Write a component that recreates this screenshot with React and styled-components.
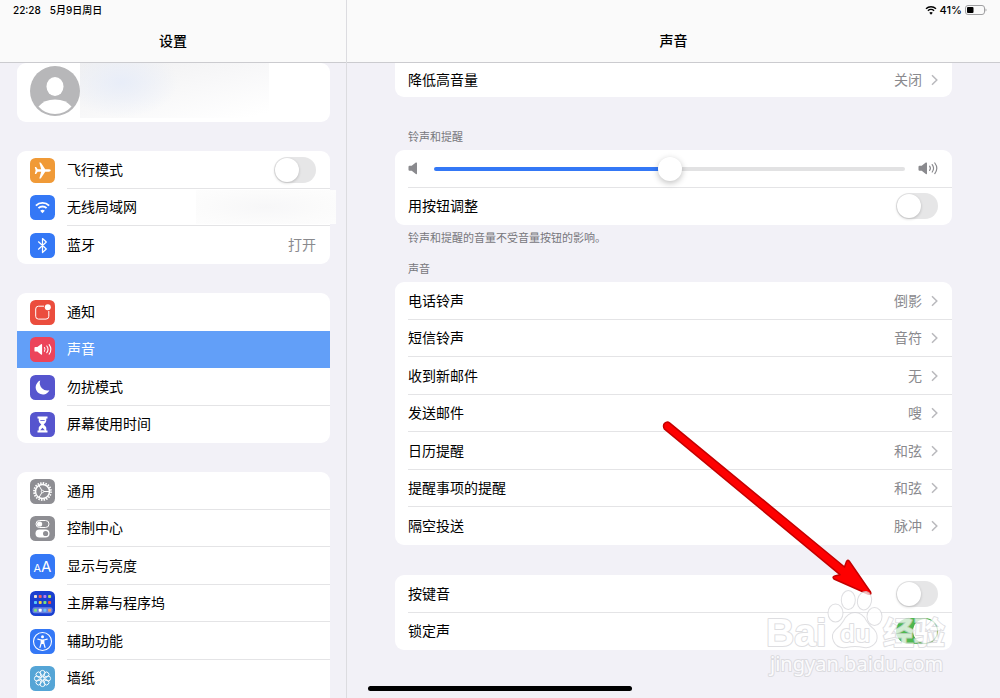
import { useState } from "react";
import styled, { createGlobalStyle, css } from "styled-components";

const soundRows = [
  { label: "电话铃声", value: "倒影" },
  { label: "短信铃声", value: "音符" },
  { label: "收到新邮件", value: "无" },
  { label: "发送邮件", value: "嗖" },
  { label: "日历提醒", value: "和弦" },
  { label: "提醒事项的提醒", value: "和弦" },
  { label: "隔空投送", value: "脉冲" },
];

const alertRows = [
  { icon: "notify", label: "通知", plain: true },
  { icon: "sound", label: "声音", active: true },
  { icon: "moon", label: "勿扰模式" },
  { icon: "hourglass", label: "屏幕使用时间" },
];

const generalRows = [
  { icon: "gear", label: "通用" },
  { icon: "control", label: "控制中心" },
  { icon: "display", label: "显示与亮度" },
  { icon: "home", label: "主屏幕与程序坞" },
  { icon: "access", label: "辅助功能" },
  { icon: "wallpaper", label: "墙纸" },
];

const tileColors = {
  plane: "#f09a37",
  wifi: "#3478f6",
  bluetooth: "#3478f6",
  notify: "#eb4d3d",
  sound: "#ec445a",
  moon: "#5655ce",
  hourglass: "#5655ce",
  gear: "#8e8e93",
  control: "#8e8e93",
  display: "#3478f6",
  home: "#1a3fd0",
  access: "#3478f6",
  wallpaper: "#55a5d6",
};

const homeDots = [
  ["#e8e4da", "#f0605a", "#b67bf2", "#b5e05a"],
  ["#5ac8fa", "#f8c93c", "#7be07b", "#f0503c"],
];

const dockDots = ["#7be07b", "#ffffff", "#6cc4f8", "#f0a060"];

const petals = [0, 45, 90, 135, 180, 225, 270, 315];

const WifiShape = () => (
  <>
    <path d="M1 4.6a8.6 8.6 0 0 1 12 0" fill="none" stroke="currentColor" strokeWidth="1.7" />
    <path d="M3.3 7a5.3 5.3 0 0 1 7.4 0" fill="none" stroke="currentColor" strokeWidth="1.7" />
    <path d="M7 11.6L4.9 9.4a3 3 0 0 1 4.2 0z" fill="currentColor" />
  </>
);

const SpeakerShape = ({ waves }) => (
  <>
    <path
      d="M1.500 3.800h2.200L7.800.6Q9 0 9 1.200v10.200q0 1.200-1.200.6L3.700 8.800H1.500Q.5 8.800.5 7.800v-3q0-1 1-1z"
      fill="currentColor"
    />
    {waves && (
      <g fill="none" stroke="currentColor" strokeWidth="1.200" strokeLinecap="round">
        <path d="M11.600 4.200q1.600 2.100 0 4.200" />
        <path d="M14.200 2.600q2.800 3.700 0 7.400" />
        <path d="M16.800 1q4 5.300 0 10.600" />
      </g>
    )}
  </>
);

const glyphs = {
  plane: (
    <path
      d="M20.800 12.500q0-1.100-1.900-1.200h-3.700L11.100 5q-.3-.5-.9-.5h-.9l1.900 6.800H7.700L6.100 9.100H4.800l.8 3.400-.8 3.400h1.300l1.600-2.200h3.500l-1.900 6.800h.9q.6 0 .9-.5l4.100-6.300h3.700q1.900-.1 1.900-1.200z"
      fill="#fff"
    />
  ),
  wifi: (
    <g transform="translate(4.800 5.500) scale(1.100)">
      <WifiShape />
    </g>
  ),
  bluetooth: (
    <path
      d="M8.500 8.800l7.800 7.200-3.800 3.500v-14L16.300 9l-7.800 7.200"
      fill="none"
      stroke="#fff"
      strokeWidth="1.200"
      strokeLinejoin="round"
      strokeLinecap="round"
    />
  ),
  notify: (
    <>
      <path
        d="M14 6.200H8.500Q5.700 6.200 5.700 9v7.300q0 2.800 2.800 2.800H16q2.800 0 2.800-2.800V11"
        fill="none"
        stroke="#fff"
        strokeWidth="1"
      />
      <circle cx="17.800" cy="7.200" r="3" fill="#fff" />
    </>
  ),
  sound: (
    <g transform="translate(4 6.700) scale(.9)">
      <SpeakerShape waves />
    </g>
  ),
  moon: <path d="M10.200 5.600a7.200 7.200 0 1 0 9.200 9.700A7.600 7.600 0 0 1 10.200 5.600z" fill="#fff" />,
  hourglass: (
    <>
      <path
        d="M7.500 4.500h10v2h-1.200v2.300q0 1.400-2.600 3.700 2.600 2.300 2.600 3.700v2.300h1.200v2h-10v-2h1.200v-2.300q0-1.400 2.600-3.700-2.600-2.300-2.600-3.700V6.500H7.500z"
        fill="#fff"
      />
      <path d="M10.200 18.200l2.300-2.400 2.300 2.400z" fill="#5655ce" />
      <path d="M10.300 8.500h4.400" stroke="#5655ce" strokeWidth=".8" />
    </>
  ),
  gear: (
    <g fill="none" stroke="#fff">
      <circle cx="12.500" cy="12.500" r="8.500" strokeWidth="1.800" strokeDasharray="1.500 1.170" />
      <circle cx="12.500" cy="12.500" r="7" strokeWidth="1.500" />
      <path d="M12.500 12.500h6.500M12.500 12.500l-3.300-5.600M12.500 12.500l-3.300 5.600" strokeWidth="1" />
      <circle cx="12.500" cy="12.500" r="1.200" fill="#8e8e93" strokeWidth=".9" />
    </g>
  ),
  control: (
    <>
      <rect x="6" y="4.500" width="13" height="7" rx="3.500" fill="none" stroke="#fff" strokeWidth="1" />
      <circle cx="9.600" cy="8" r="2.600" fill="#fff" />
      <rect x="5.500" y="13.500" width="14" height="8" rx="4" fill="#fff" />
      <circle cx="15.600" cy="17.500" r="2.600" fill="#8e8e93" />
    </>
  ),
  display: (
    <g fill="#fff" fontFamily="Inter, sans-serif">
      <text x="3.500" y="17.500" fontSize="11">A</text>
      <text x="11" y="17.500" fontSize="15">A</text>
    </g>
  ),
  home: (
    <>
      {homeDots.map((row, y) =>
        row.map((fill, x) => (
          <rect key={`${y}-${x}`} x={4 + x * 4.700} y={4 + y * 6} width="3" height="3" rx=".8" fill={fill} />
        ))
      )}
      <rect x="2.500" y="16.300" width="20" height="6" rx="2" fill="#fff" opacity=".35" />
      {dockDots.map((fill, x) => (
        <rect key={fill} x={4 + x * 4.700} y="17.800" width="3" height="3" rx=".8" fill={fill} />
      ))}
    </>
  ),
  access: (
    <>
      <circle cx="12.500" cy="12.500" r="9" fill="none" stroke="#fff" strokeWidth="1.100" />
      <circle cx="12.500" cy="7.700" r="1.500" fill="#fff" />
      <path
        d="M7.800 10.200l3.400.8v3l-1.200 4.400M17.200 10.200l-3.400.8v3l1.200 4.400"
        fill="none"
        stroke="#fff"
        strokeWidth="1.200"
        strokeLinecap="round"
        strokeLinejoin="round"
      />
      <path d="M11 10.500h3v4.500h-3z" fill="#fff" />
    </>
  ),
  wallpaper: (
    <g fill="none" stroke="#fff" strokeWidth=".9">
      {petals.map((angle) => (
        <circle key={angle} cx="12.500" cy="6.900" r="2.500" transform={`rotate(${angle} 12.500 12.500)`} />
      ))}
      {petals.map((angle) => (
        <path key={angle} d="M12.500 9.500v1.600" transform={`rotate(${angle + 22} 12.500 12.500)`} />
      ))}
      <circle cx="12.500" cy="12.500" r="1.800" />
    </g>
  ),
};

const Tile = ({ name }) => (
  <TileSvg viewBox="0 0 25 25" aria-hidden="true">
    <rect width="25" height="25" rx="5.500" fill={tileColors[name]} />
    {glyphs[name]}
  </TileSvg>
);

const Speaker = ({ waves }) => (
  <SpeakerSvg viewBox="0 0 20 13" aria-hidden="true">
    <SpeakerShape waves={waves} />
  </SpeakerSvg>
);

const Chevron = () => (
  <ChevronSvg viewBox="0 0 7 12" aria-hidden="true">
    <path d="M1 1.300l4.800 4.700L1 10.700" />
  </ChevronSvg>
);

const SidebarRow = ({ icon, label, value, active, plain }) => (
  <Row as="a" href="#" $active={active} $plain={plain}>
    <Tile name={icon} />
    <RowBody>
      <RowLabel>{label}</RowLabel>
      {value && <RowValue>{value}</RowValue>}
    </RowBody>
  </Row>
);

const SoundRow = ({ label, value }) => (
  <Row as="a" href="#">
    <RowBody>
      <RowLabel>{label}</RowLabel>
      <RowValue>{value}</RowValue>
      <Chevron />
    </RowBody>
  </Row>
);

const ToggleRow = ({ icon, label, defaultChecked }) => (
  <Row as="label">
    {icon && <Tile name={icon} />}
    <RowBody>
      <RowLabel>{label}</RowLabel>
      <Toggle type="checkbox" role="switch" defaultChecked={defaultChecked} />
    </RowBody>
  </Row>
);

const App = () => {
  const [volume, setVolume] = useState(50);

  return (
    <>
      <GlobalStyle />
      <Screen>
        <Sidebar>
          <Header>
            <StatusBar>
              <span>22:28</span>
              <span>5月9日周日</span>
            </StatusBar>
            <Title>设置</Title>
          </Header>
          <SidebarContent>
            <ProfileCard>
              <Avatar viewBox="0 0 50 50" aria-hidden="true">
                <circle cx="25" cy="25" r="25" fill="#b7b7b9" />
                <ellipse cx="25" cy="20.500" rx="8.500" ry="9.500" fill="#fff" />
                <path d="M8.500 40.500Q14 33.500 25 33.500t16.500 7Q35 48 25 48T8.500 40.500z" fill="#fff" />
              </Avatar>
              <HiddenName />
            </ProfileCard>
            <Group>
              <ToggleRow icon="plane" label="飞行模式" />
              <Row as="a" href="#">
                <Tile name="wifi" />
                <RowBody>
                  <RowLabel>无线局域网</RowLabel>
                  <HiddenNetwork />
                </RowBody>
              </Row>
              <SidebarRow icon="bluetooth" label="蓝牙" value="打开" />
            </Group>
            <Group>
              {alertRows.map((row) => (
                <SidebarRow key={row.label} {...row} />
              ))}
            </Group>
            <Group $open>
              {generalRows.map((row) => (
                <SidebarRow key={row.label} {...row} />
              ))}
            </Group>
          </SidebarContent>
        </Sidebar>

        <Detail>
          <Header>
            <StatusBar $end>
              <StatusWifi viewBox="0 0 14 12" aria-hidden="true">
                <WifiShape />
              </StatusWifi>
              <span>41%</span>
              <Battery viewBox="0 0 22 10" aria-hidden="true">
                <rect x=".5" y=".5" width="19" height="9" rx="2.500" fill="none" stroke="#a0a0a2" />
                <rect x="2" y="2" width="6.500" height="6" rx="1" fill="#000" />
                <path d="M20.500 3.500q1 .3 1 1.500t-1 1.500z" fill="#a0a0a2" />
              </Battery>
            </StatusBar>
            <Title>声音</Title>
          </Header>
          <DetailContent>
            <Group $flush>
              <SoundRow label="降低高音量" value="关闭" />
            </Group>

            <Section>
              <Caption as="h2">铃声和提醒</Caption>
              <Group>
                <Row>
                  <RowBody>
                    <Speaker />
                    <Slider
                      type="range"
                      aria-label="铃声和提醒"
                      value={volume}
                      onChange={(e) => setVolume(e.target.value)}
                      style={{ "--fill": `${volume}%` }}
                    />
                    <Speaker waves />
                  </RowBody>
                </Row>
                <ToggleRow label="用按钮调整" />
              </Group>
              <Caption $note>铃声和提醒的音量不受音量按钮的影响。</Caption>
            </Section>

            <Section $tight>
              <Caption as="h2">声音</Caption>
              <Group>
                {soundRows.map((row) => (
                  <SoundRow key={row.label} {...row} />
                ))}
              </Group>
            </Section>

            <Section>
              <Group>
                <ToggleRow label="按键音" />
                <ToggleRow label="锁定声" defaultChecked />
              </Group>
            </Section>
          </DetailContent>
        </Detail>

        <HomeBar />

        <Arrow viewBox="0 0 212 178" aria-hidden="true">
          <path
            d="M7.500 1.800L182.500 146l2-5.500q1.200-2.500 2.800-.2L208.500 171q1.200 2.800-2 2.200L172 158q-2.200-2.300.8-3l5.200-1.300L2.300 7.800Q.6 4.600 2.600 2.300 5.200 0 7.500 1.800z"
            fill="#fe0000"
            stroke="#c40000"
            strokeWidth="1.500"
            strokeLinejoin="round"
          />
        </Arrow>

        <Watermark viewBox="0 0 190 90" aria-hidden="true">
          <g fill="#fff" stroke="#d4d4d8" strokeWidth="2" strokeLinejoin="round" paintOrder="stroke" opacity=".75">
            <ellipse cx="73.500" cy="42" rx="7" ry="8.500" />
            <ellipse cx="86.300" cy="29" rx="6.500" ry="9" />
            <ellipse cx="102.500" cy="29.700" rx="6.500" ry="8.800" transform="rotate(12 102.500 29.700)" />
            <ellipse cx="112.500" cy="45.500" rx="7" ry="8.500" />
            <path d="M93 42q7 0 11 8 3 5 8 9 4 5 2 11-4 7-12 6-9-2-18 0-9 1-12-6-3-6 2-11 5-4 8-9 4-8 11-8z" />
            <text x="4" y="75" fontSize="39" fontWeight="700" fontFamily="Liberation Sans, sans-serif">
              Bai
            </text>
            <text x="78" y="71" fontSize="24" fontWeight="600" fontFamily="Noto Sans, sans-serif">
              du
            </text>
            <text x="121" y="73" fontSize="31" fontWeight="700" fontFamily="Noto Sans CJK SC, sans-serif">
              经验
            </text>
            <text x="8" y="100" fontSize="20" fontFamily="Noto Sans, sans-serif">
              jingyan.baidu.com
            </text>
          </g>
        </Watermark>
      </Screen>
    </>
  );
};

const GlobalStyle = createGlobalStyle`
  * {
    box-sizing: border-box;
  }

  body {
    margin: 0;
    background: #f2f1f7;
    color: #000;
    font-family: Inter, "Noto Sans CJK SC", sans-serif;
    font-size: 14px;
    line-height: 20px;
  }

  h1,
  h2,
  p {
    margin: 0;
  }
`;

const Screen = styled.div`
  position: relative;
  display: flex;
  height: 100vh;
  overflow: hidden;
`;

const Sidebar = styled.nav`
  display: flex;
  flex-direction: column;
  flex: 0 0 347px;
  border-right: 1px solid #dcdce0;
`;

const Detail = styled.main`
  display: flex;
  flex-direction: column;
  flex: 1;
  min-width: 0;
`;

const Header = styled.header`
  flex-shrink: 0;
  padding-bottom: 11px;
  background: #fafafa;
  border-bottom: 1px solid #cbcbcf;
`;

const StatusBar = styled.div`
  display: flex;
  align-items: center;
  justify-content: ${({ $end }) => ($end ? "flex-end" : "flex-start")};
  gap: ${({ $end }) => ($end ? "3px" : "9px")};
  height: 20px;
  margin-bottom: 11px;
  padding: 0 13px;
  font-size: ${({ $end }) => ($end ? "11px" : "10px")};
  font-weight: 500;
`;

const Title = styled.h1`
  font-size: 14px;
  font-weight: 500;
  line-height: 20px;
  text-align: center;
`;

const SidebarContent = styled.div`
  display: flex;
  flex-direction: column;
  gap: 29px;
  flex: 1;
  min-height: 0;
  padding: 0 16px 0 17px;
  overflow: hidden;
`;

const DetailContent = styled.div`
  flex: 1;
  min-height: 0;
  padding: 0 48px;
  overflow: hidden;
`;

const Section = styled.section`
  margin-top: ${({ $tight }) => ($tight ? "11px" : "30px")};
`;

const Caption = styled.p`
  padding: ${({ $note }) => ($note ? "3px 13px 0" : "0 13px 3px")};
  color: #77777c;
  font-size: 11px;
  font-weight: 400;
  line-height: 20px;
`;

const ProfileCard = styled.div`
  display: flex;
  flex-shrink: 0;
  padding: 0 13px 4px;
  background: #fff;
  border-radius: 9px;
`;

const Avatar = styled.svg`
  width: 50px;
  height: 50px;
  margin-top: 3px;
`;

const HiddenName = styled.div`
  width: 189px;
  height: 55px;
  background:
    radial-gradient(ellipse 80px 50px at 22% 35%, #e8edf8 0, transparent 70%),
    linear-gradient(165deg, #f0f0f1 0, #f7f7f8 45%, #fff 95%);
`;

const HiddenNetwork = styled.div`
  width: 140px;
  height: 34px;
  margin-right: -20px;
  background: radial-gradient(ellipse at 50% 50%, #f7f7f8 0, #fbfbfb 60%, #fdfdfd 100%);
`;

const RowBody = styled.div`
  display: flex;
  align-items: center;
  flex: 1;
  align-self: stretch;
  min-width: 0;
  padding-right: 14px;
  border-bottom: 1px solid #e4e4e6;
`;

const Row = styled.div`
  display: flex;
  align-items: center;
  gap: 12px;
  height: 38px;
  padding-left: 13px;
  color: inherit;
  text-decoration: none;

  &:nth-child(even) {
    height: 37px;
  }

  &:last-child ${RowBody} {
    border-bottom-color: transparent;
  }

  ${({ $plain }) =>
    $plain &&
    css`
      ${RowBody} {
        border-bottom-color: transparent;
      }
    `}

  ${({ $active }) =>
    $active &&
    css`
      background: #629ff8;
      color: #fff;

      ${RowBody} {
        border-bottom-color: transparent;
      }
    `}
`;

const Group = styled.div`
  flex-shrink: 0;
  padding-bottom: ${({ $open }) => ($open ? "20px" : "0")};
  background: #fff;
  border-radius: ${({ $flush }) => ($flush ? "0 0 9px 9px" : "9px")};

  ${({ $flush }) =>
    $flush &&
    css`
      ${Row} {
        height: 34px;
      }
    `}
`;

const RowLabel = styled.span`
  flex: 1;
  white-space: nowrap;
`;

const RowValue = styled.span`
  color: #8a8a8e;
`;

const TileSvg = styled.svg`
  flex-shrink: 0;
  width: 25px;
  height: 25px;
  color: #fff;
`;

const SpeakerSvg = styled.svg`
  flex-shrink: 0;
  width: 20px;
  height: 13px;
  color: #8a8a8e;
`;

const ChevronSvg = styled.svg`
  width: 7px;
  height: 12px;
  margin-left: 9px;
  fill: none;
  stroke: #b9b9bd;
  stroke-width: 1.5;
`;

const Toggle = styled.input`
  appearance: none;
  flex-shrink: 0;
  width: 42px;
  height: 26px;
  margin: 0;
  padding: 1px;
  background: #e6e6e7;
  border-radius: 13px;
  cursor: pointer;

  &::before {
    content: "";
    display: block;
    width: 24px;
    height: 24px;
    background: #fff;
    border-radius: 50%;
    box-shadow: 0 1px 3px rgba(0, 0, 0, 0.2);
  }

  &:checked {
    background: #4fb84f;
  }

  &:checked::before {
    margin-left: auto;
  }
`;

const Slider = styled.input`
  appearance: none;
  flex: 1;
  min-width: 0;
  height: 24px;
  margin: 0 13px 0 6px;
  background: transparent;

  &::-webkit-slider-runnable-track {
    height: 4px;
    border-radius: 2px;
    background: linear-gradient(to right, #3478f6 var(--fill), #e2e2e3 var(--fill));
  }

  &::-webkit-slider-thumb {
    appearance: none;
    width: 24px;
    height: 24px;
    margin-top: -10px;
    background: #fff;
    border-radius: 50%;
    box-shadow: 0 2px 6px rgba(0, 0, 0, 0.25);
  }
`;

const StatusWifi = styled.svg`
  width: 12px;
  height: 10px;
`;

const Battery = styled.svg`
  width: 22px;
  height: 10px;
`;

const HomeBar = styled.div`
  position: absolute;
  bottom: 7px;
  left: 50%;
  width: 264px;
  height: 5px;
  margin-left: -132px;
  background: #000;
  border-radius: 3px;
`;

const Arrow = styled.svg`
  position: absolute;
  top: 421px;
  left: 662px;
  width: 212px;
  height: 178px;
  pointer-events: none;
`;

const Watermark = styled.svg`
  position: absolute;
  right: 48px;
  bottom: 37px;
  width: 190px;
  height: 90px;
  overflow: visible;
  pointer-events: none;
`;

export default App;
